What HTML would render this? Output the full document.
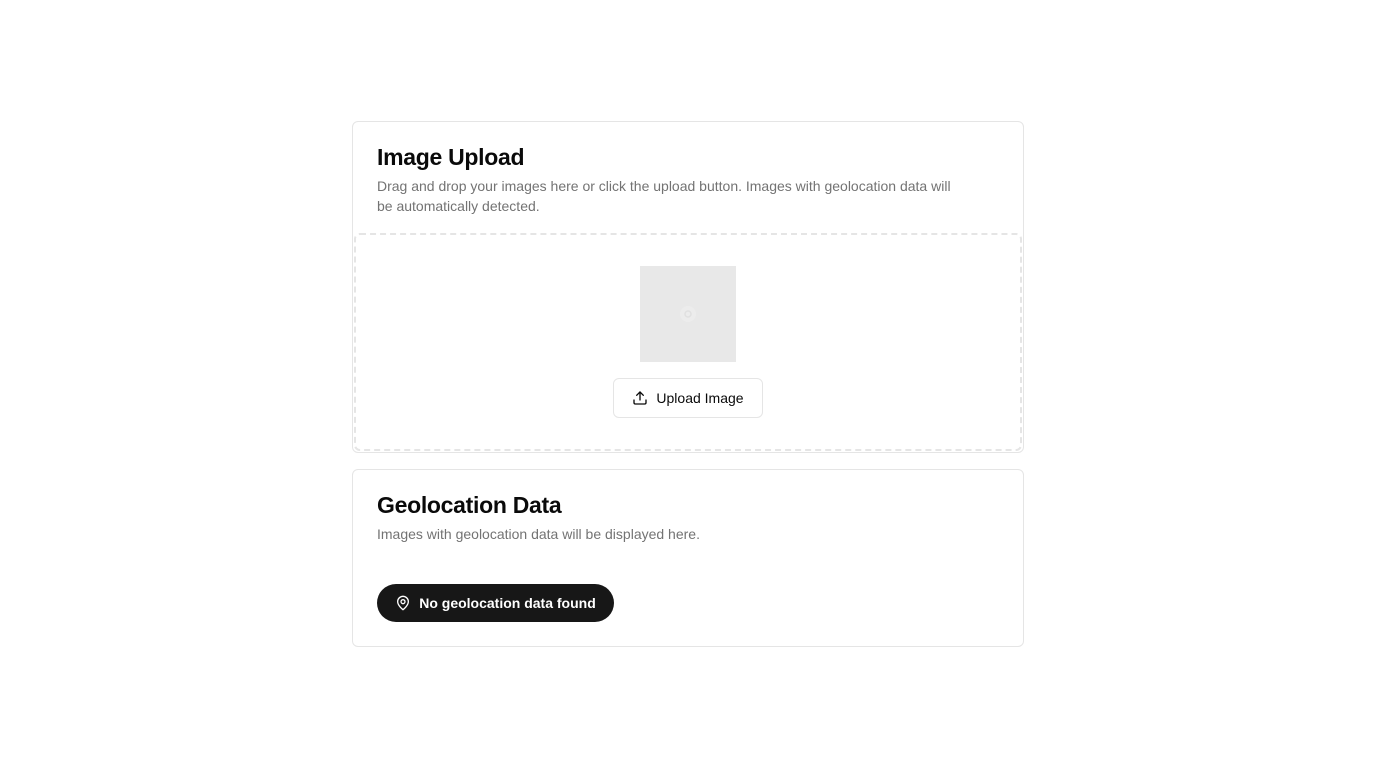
<!DOCTYPE html>
<html><head><meta charset="utf-8"><style>
*{box-sizing:border-box;margin:0;padding:0}
body{width:1376px;height:768px;background:#fff;font-family:"Liberation Sans",sans-serif;color:#0a0a0a;position:relative}
.card{position:absolute;left:352px;width:672px;border:1px solid #e5e5e5;border-radius:6px;background:#fff}
h2{font-size:23px;font-weight:700;letter-spacing:-0.3px;position:absolute;left:24px}
p{font-size:14px;color:#737373;line-height:20px;position:absolute;left:24px;width:630px}
.drop{position:absolute;left:1px;top:111px;width:668px;height:218px;border:2px dashed #e5e5e5;border-radius:6px}
.ph{position:absolute;left:284px;top:31px;width:96px;height:96px;background:#e8e8e8}
.btn{position:absolute;left:257px;top:143px;width:150px;height:40px;border:1px solid #e5e5e5;border-radius:6px;display:flex;align-items:center;justify-content:center;gap:8px;font-size:14px;font-weight:500;background:#fff}
.badge{position:absolute;left:24px;top:114px;width:237px;height:38px;border-radius:19px;background:#171717;color:#fff;display:flex;align-items:center;justify-content:center;gap:8px;font-size:14px;font-weight:700}
</style></head><body>
<div class="card" style="top:121px;height:332px">
<h2 style="top:22px">Image Upload</h2>
<p style="top:54px">Drag and drop your images here or click the upload button. Images with geolocation data will<br>be automatically detected.</p>
<div class="drop">
<div class="ph"><svg style="position:absolute;left:38px;top:38px" width="20" height="20" viewBox="0 0 20 20"><circle cx="10" cy="10" r="8" fill="#ececec"/><circle cx="10" cy="10" r="3" fill="none" stroke="#e0e0e0" stroke-width="1.5"/></svg></div>
<div class="btn"><svg width="16" height="16" viewBox="0 0 24 24" fill="none" stroke="#0a0a0a" stroke-width="2" stroke-linecap="round" stroke-linejoin="round"><path d="M21 15v4a2 2 0 0 1-2 2H5a2 2 0 0 1-2-2v-4"/><path d="M17 8l-5-5-5 5"/><path d="M12 3v12"/></svg>Upload Image</div>
</div>
</div>
<div class="card" style="top:469px;height:178px">
<h2 style="top:22px">Geolocation Data</h2>
<p style="top:54px">Images with geolocation data will be displayed here.</p>
<div class="badge"><svg width="16" height="16" viewBox="0 0 24 24" fill="none" stroke="#fff" stroke-width="2" stroke-linecap="round" stroke-linejoin="round"><path d="M20 10c0 6-8 12-8 12s-8-6-8-12a8 8 0 0 1 16 0z"/><circle cx="12" cy="10" r="3"/></svg>No geolocation data found</div>
</div>
</body></html>
